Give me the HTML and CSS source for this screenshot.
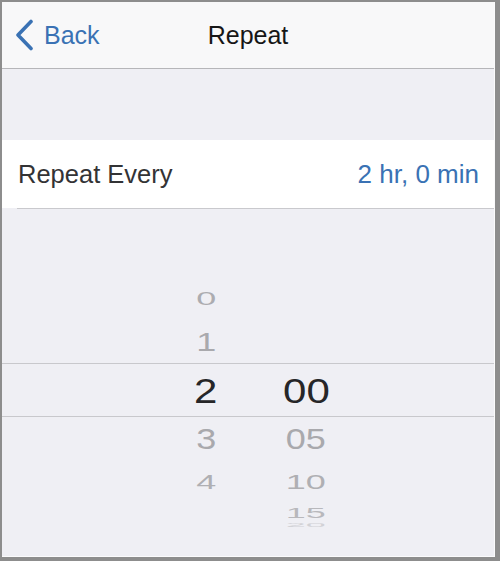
FILE: index.html
```html
<!DOCTYPE html>
<html lang="en">
<head>
<meta charset="utf-8">
<title>Repeat</title>
<link rel="stylesheet" href="styles.css">
</head>
<body>
<div class="frame">
  <div class="screen">
    <header class="nav">
      <div class="back">
        <svg class="chev" width="18" height="32" viewBox="0 0 18 32" aria-hidden="true">
          <path d="M16 2.5 L3 16 L16 29.5" fill="none" stroke="#3a72b4" stroke-width="3.6" stroke-linecap="round" stroke-linejoin="round"/>
        </svg>
        <span class="back-label">Back</span>
      </div>
      <div class="title">Repeat</div>
      <div class="spacer"></div>
    </header>
    <div class="gap"></div>
    <div class="row">
      <span class="label">Repeat Every</span>
      <span class="value">2 hr, 0 min</span>
    </div>
    <div class="sep"></div>
    <div class="picker">
      <div class="prow ra"><div class="cell"><span class="d far2">0</span></div><div class="cell"></div></div>
      <div class="prow rb"><div class="cell"><span class="d near1">1</span></div><div class="cell"></div></div>
      <div class="prow rc"><div class="cell"><span class="d sel">2</span></div><div class="cell"><span class="d sel">00</span></div></div>
      <div class="prow rd"><div class="cell"><span class="d down1">3</span></div><div class="cell"><span class="d down1">05</span></div></div>
      <div class="prow re"><div class="cell"><span class="d down2">4</span></div><div class="cell"><span class="d down2">10</span></div></div>
      <div class="prow rf"><div class="cell"></div><div class="cell"><span class="d down3">15</span></div></div>
      <div class="prow rg"><div class="cell"></div><div class="cell"><span class="d down4">20</span></div></div>
    </div>
  </div>
</div>
</body>
</html>
```

FILE: styles.css
```css
html, body {
  margin: 0;
  padding: 0;
}

body {
  font-family: "Liberation Sans", Arial, sans-serif;
  background: #8d8d8d;
}

.frame {
  width: 500px;
  height: 561px;
  box-sizing: border-box;
  border-style: solid;
  border-color: #8d8d8d;
  border-width: 2px 5px 4px 2px;
  background: #efeff4;
  overflow: hidden;
}

.screen {
  height: 100%;
  box-sizing: border-box;
  border-right: 1px solid #fbfbfc;
  border-bottom: 1px solid #fbfbfc;
  background: #efeff4;
  display: flex;
  flex-direction: column;
  overflow: hidden;
}

.nav {
  height: 66px;
  flex: none;
  background: #f8f8f9;
  border-bottom: 1px solid #b6b6b9;
  display: grid;
  grid-template-columns: 1fr auto 1fr;
  align-items: center;
  padding: 0 13px;
}

.back {
  display: flex;
  align-items: center;
  gap: 11px;
  color: #3a72b4;
  font-size: 25px;
}

.chev {
  display: block;
}

.back-label {
  line-height: 1;
}

.title {
  font-size: 25px;
  color: #161616;
  line-height: 1;
}

.gap {
  height: 71px;
  flex: none;
}

.row {
  height: 68px;
  flex: none;
  background: #ffffff;
  display: flex;
  align-items: center;
  justify-content: space-between;
  padding: 0 15px 0 16px;
}

.label {
  font-size: 25.5px;
  color: #333335;
}

.value {
  font-size: 26px;
  color: #3a72b4;
}

.sep {
  height: 1px;
  flex: none;
  margin-left: 15px;
  background: #c9c9cd;
}

.picker {
  flex: 1;
  padding-top: 69px;
}

.prow {
  display: flex;
  padding-left: 154px;
  box-sizing: border-box;
}

.cell {
  width: 100px;
  display: flex;
  align-items: center;
  justify-content: center;
  overflow: visible;
}

.ra { height: 42px; }
.rb { height: 43px; }
.rc {
  height: 54px;
  border-top: 1px solid #c8c8cc;
  border-bottom: 1px solid #c8c8cc;
  margin-left: -2px;
  padding-left: 156px;
}
.rd { height: 44px; }
.re { height: 42px; }
.rf { height: 19px; }
.rg { height: 6px; }

.d {
  display: inline-block;
  font-size: 30px;
  line-height: 1;
  color: #a9a9ad;
  transform-origin: 50% 50%;
  white-space: nowrap;
}

.sel {
  font-size: 35px;
  color: #262628;
  transform: scale(1.2, 1);
}

.far2 {
  transform: scale(1.2, 0.6);
  color: #acacb0;
}

.near1 {
  transform: scale(1.2, 0.88);
}

.down1 {
  transform: scale(1.2, 1);
}

.down2 {
  transform: scale(1.2, 0.7);
  color: #afafb3;
}

.down3 {
  transform: scale(1.2, 0.47);
  color: #b8b8bc;
}

.down4 {
  transform: scale(1.2, 0.18);
  color: #d2d2d6;
}
```
